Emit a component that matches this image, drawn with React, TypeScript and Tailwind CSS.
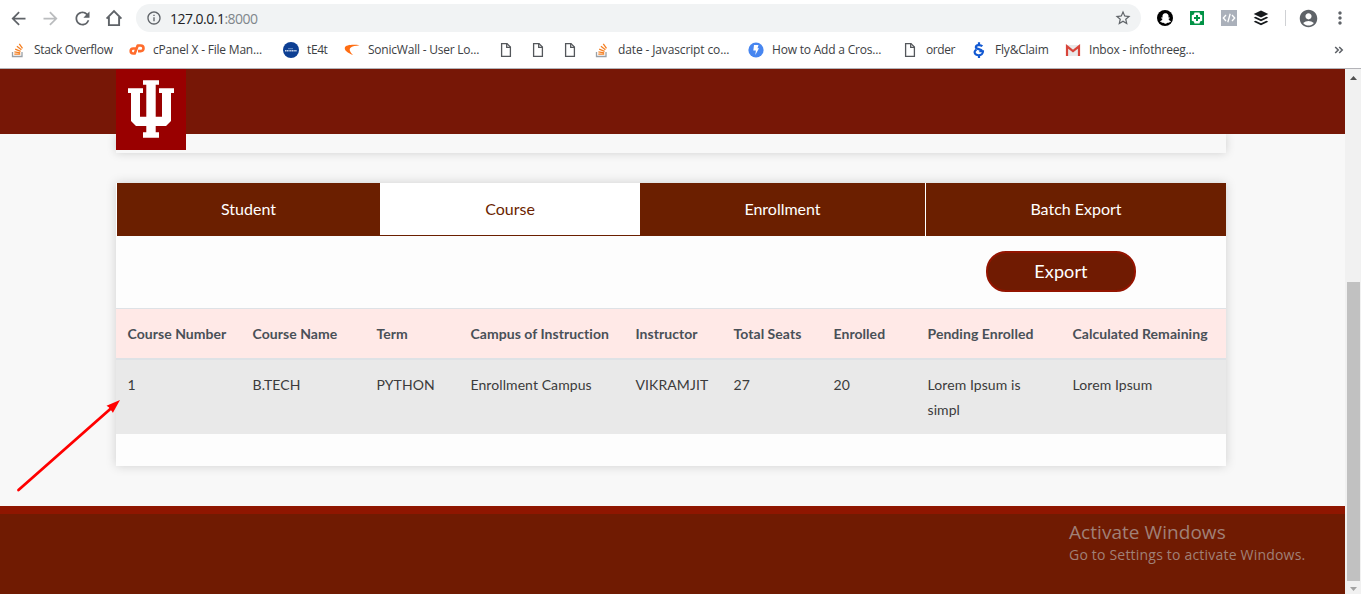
import type { ReactNode } from "react";
import { FaSnapchatGhost } from "react-icons/fa";
import {
  MdArrowBack,
  MdArrowForward,
  MdRefresh,
  MdInfoOutline,
  MdStarBorder,
  MdAccountCircle,
  MdMoreVert,
} from "react-icons/md";

function HomeIcon() {
  return (
    <svg width="20" height="20" viewBox="0 0 20 20" fill="none" stroke="#5f6368" strokeWidth="1.9">
      <path d="M2.600 10.600 10 3.200l7.400 7.400" />
      <path d="M4.900 9v8.100h10.200V9" />
    </svg>
  );
}

function StackOverflowIcon() {
  return (
    <svg width="16" height="16" viewBox="0 0 16 16" fill="none" strokeWidth="1.3">
      <path d="M2.500 10v4.500h9.500V10" stroke="#9aa0a6" />
      <path d="M4.300 12.200h6M4.400 9.800l5.800 1M5.200 7.100l5.400 2.200M6.900 4.200l4.500 3.600M9.300 1.800l3.200 4.600" stroke="#f48024" />
    </svg>
  );
}

function CPanelIcon() {
  return (
    <svg width="16" height="16" viewBox="0 0 16 16" fill="none" stroke="#ff6c2c" strokeWidth="2.600">
      <path d="M7 6.500H4.200a2.500 2.500 0 0 0 0 5h1.500L8.700 3.500h3a2.700 2.700 0 0 1 0 5.600H9" strokeLinejoin="round" />
    </svg>
  );
}

function RoundBadge() {
  return (
    <svg width="16" height="16" viewBox="0 0 16 16">
      <circle cx="8" cy="8" r="8" fill="#0d3f93" />
      <path d="M5 6.700h5" stroke="#6d8fc4" strokeWidth="1" />
      <path d="M2 8.800h12" stroke="#c5d4ea" strokeWidth="1.600" strokeDasharray="1.300 .400" />
    </svg>
  );
}

function SonicWallIcon() {
  return (
    <svg width="16" height="16" viewBox="0 0 16 16">
      <path d="M15.500 3.200C9 2.500 1.500 2.700.800 5.800.400 8.500 3.500 11 9 13 6.600 10.500 4.800 8 6.300 6 8 4 12 3.800 15.500 3.200Z" fill="#ff6d12" />
    </svg>
  );
}

function FileIcon() {
  return (
    <svg width="16" height="16" viewBox="0 0 16 16" fill="none" stroke="#54575b" strokeWidth="1.300">
      <path d="M3.600 1.600H9L12.400 5v9.400H3.600Z" />
      <path d="M8.700 1.600v3.700h3.700" />
    </svg>
  );
}

function BoltIcon() {
  return (
    <svg width="16" height="16" viewBox="0 0 16 16">
      <circle cx="8" cy="8" r="7.600" fill="#4786f0" />
      <path d="M6 3h4.500L9.500 6.300H11L7.300 13l.6-4.500H5.300Z" fill="#fff" />
    </svg>
  );
}

function FlyIcon() {
  return (
    <svg width="16" height="16" viewBox="0 0 16 16" fill="none" stroke="#1259d2">
      <path d="M8 .3v2.700M8 13v2.900" strokeWidth="2.200" />
      <path d="M11.300 4.300C9.500 2.500 4.900 2.600 4.900 5.200c0 2.200 4.800 1.500 6.300 3.600" strokeWidth="2.300" />
      <path d="M5.500 7.600C2 9.500 3.800 13.300 7.500 13.300c2.800 0 4.500-1.500 4.500-4H8.300" strokeWidth="2.100" />
    </svg>
  );
}

function GmailIcon() {
  return (
    <svg width="16" height="16" viewBox="0 0 16 16">
      <path d="M1 3h14v11H1Z" fill="#e9e9e9" />
      <path d="M2 14V4.300l6 4.900 6-4.900V14" fill="none" stroke="#d8443a" strokeWidth="2.200" />
    </svg>
  );
}

function BufferIcon() {
  return (
    <svg width="16" height="16" viewBox="0 0 16 16" fill="#16191c">
      <path d="M8 .5 15.300 4 8 7.500.700 4Z" />
      <path d="M2.600 6.700.700 7.800 8 11.300l7.300-3.500-1.900-1.100L8 9.300Z" />
      <path d="M2.600 10.700.700 11.800 8 15.300l7.300-3.500-1.900-1.100L8 13.300Z" />
    </svg>
  );
}

function PlusBadge() {
  return (
    <svg width="16" height="16" viewBox="0 0 16 16">
      <path d="M1 1h14v14H1Z" fill="#009245" />
      <path d="M5.500 2.600h5l.6 1.900 2.100.8v5.400l-2.100.8-.6 1.900h-5l-.6-1.900-2.100-.8V5.300l2.100-.8Z" fill="#fff" />
      <path d="M8 5v6M5 8h6" stroke="#009245" strokeWidth="2" />
    </svg>
  );
}

function CodeBadge() {
  return (
    <svg width="16" height="16" viewBox="0 0 16 16">
      <path d="M0 0h16v16H0Z" fill="#aab0ba" />
      <path d="M5 5 2.300 8 5 11M11 5l2.700 3L11 11M9.200 3.800 6.800 12.200" fill="none" stroke="#fff" strokeWidth="1.300" />
    </svg>
  );
}

function TridentLogo() {
  return (
    <svg width="70" height="81" viewBox="0 0 70 81">
      <path d="M0 0h70v81H0Z" fill="#990000" />
      <path
        d="M27 11.200h16v4.500h-3.300V47.700H46V24h-3v-4.700h15V24h-3v28l-5 5H39.700v6.200H43v5.600H27v-5.600h3.300V57H20l-5-5V24h-3v-4.700h15V24h-3v23.700h6.300v-32H27Z"
        fill="#fff"
      />
    </svg>
  );
}

function Bookmark({ icon, label, width, tracking }: { icon: ReactNode; label?: string; width: string; tracking?: string }) {
  return (
    <div className={`flex shrink-0 items-center gap-2 ${width}`}>
      <span className="shrink-0">{icon}</span>
      {label && <span className={`whitespace-nowrap ${tracking ?? ""}`}>{label}</span>}
    </div>
  );
}

function BrowserBar() {
  return (
    <header className="h-[69px] border-b border-[#b3b3b8] bg-white font-['Open_Sans','Noto_Sans',sans-serif]">
      <div className="flex h-9 items-center text-[#5f6368]">
        <div className="flex w-[136px] items-center gap-[11px] pl-[7.5px]">
          <MdArrowBack size={21} />
          <MdArrowForward size={21} className="text-[#babcbe]" />
          <MdRefresh size={21} />
          <HomeIcon />
        </div>
        <div className="mr-4 flex h-7 w-[1005px] items-center rounded-full bg-[#f1f3f4] pr-[9px] pl-[10px]">
          <MdInfoOutline size={16} />
          <span className="ml-2 text-[14px] tracking-[-0.52px] text-[#202124]">
            127.0.0.1<span className="text-[#80868b]">:8000</span>
          </span>
          <MdStarBorder size={18} className="ml-auto" />
        </div>
        <span className="flex h-4 w-4 items-center justify-center rounded-full bg-black text-white">
          <FaSnapchatGhost size={11} />
        </span>
        <span className="ml-4"><PlusBadge /></span>
        <span className="ml-4"><CodeBadge /></span>
        <span className="ml-4"><BufferIcon /></span>
        <span className="ml-4 h-4 w-px bg-[#cfd1d4]" />
        <MdAccountCircle size={21} className="ml-[11.5px]" />
        <MdMoreVert size={20} className="ml-[11.5px]" />
      </div>
      <nav className="flex h-7 items-center pl-[10px] text-[12px] text-[#3c4043]">
        <Bookmark icon={<StackOverflowIcon />} label="Stack Overflow" width="w-[119px]" tracking="tracking-[-0.33px]" />
        <Bookmark icon={<CPanelIcon />} label="cPanel X - File Man..." width="w-[154px]" tracking="tracking-[-0.2px]" />
        <Bookmark icon={<RoundBadge />} label="tE4t" width="w-[61px]" tracking="tracking-[-0.4px]" />
        <Bookmark icon={<SonicWallIcon />} label="SonicWall - User Lo..." width="w-[154px]" tracking="tracking-[-0.22px]" />
        <Bookmark icon={<FileIcon />} width="w-8" />
        <Bookmark icon={<FileIcon />} width="w-8" />
        <Bookmark icon={<FileIcon />} width="w-8" />
        <Bookmark icon={<StackOverflowIcon />} label="date - Javascript co..." width="w-[154px]" tracking="tracking-[-0.13px]" />
        <Bookmark icon={<BoltIcon />} label="How to Add a Cros..." width="w-[154px]" tracking="tracking-[-0.2px]" />
        <Bookmark icon={<FileIcon />} label="order" width="w-[69px]" tracking="tracking-[-0.4px]" />
        <Bookmark icon={<FlyIcon />} label="Fly&Claim" width="w-[94px]" tracking="tracking-[-0.2px]" />
        <Bookmark icon={<GmailIcon />} label="Inbox - infothreeg..." width="w-[269px]" tracking="tracking-[-0.18px]" />
        <svg width="10" height="8" viewBox="0 0 10 8" fill="none" stroke="#5f6368" strokeWidth="1.600">
          <path d="m1.200 1 3 3-3 3M5.200 1l3 3-3 3" />
        </svg>
      </nav>
    </header>
  );
}

const columns = [
  { title: "Course Number", value: "1" },
  { title: "Course Name", value: "B.TECH" },
  { title: "Term", value: "PYTHON" },
  { title: "Campus of Instruction", value: "Enrollment Campus" },
  { title: "Instructor", value: "VIKRAMJIT" },
  { title: "Total Seats", value: "27" },
  { title: "Enrolled", value: "20" },
  { title: "Pending Enrolled", value: "Lorem Ipsum is simpl" },
  { title: "Calculated Remaining", value: "Lorem Ipsum" },
];

const rowGrid = "grid grid-cols-[125px_124px_94px_165px_98px_100px_94px_145px_165px]";

function CoursePanel() {
  return (
    <section className="mt-[30px] ml-[116px] h-[283px] w-[1110px] bg-[#fdfdfd] shadow-[0_0_10px_rgba(0,0,0,0.17)]">
      <div className="flex h-[53px] bg-white pl-px text-center text-[16px] leading-[52px] text-white">
        <div className="w-[263px] bg-[#6b1f00]">Student</div>
        <div className="w-[260px] border-b border-[#6b1f00] bg-white text-[#6b1f00]">Course</div>
        <div className="w-[285px] bg-[#6b1f00]">Enrollment</div>
        <div className="ml-px w-[300px] bg-[#6b1f00]">Batch Export</div>
      </div>
      <div className="flex h-[72px] justify-end pt-[15px] pr-[90px]">
        <button className="h-[41px] w-[150px] rounded-[20px] border-2 border-[#941400] bg-[#701b02] text-[18px] tracking-[0.1px] text-white">
          Export
        </button>
      </div>
      <div className={`${rowGrid} h-[52px] border-t border-b-2 border-[#dee2e6] bg-[#ffe9e7] text-[14px] leading-[50px] font-bold tracking-[0.05px] text-[#495057]`}>
        {columns.map((column) => (
          <div key={column.title} className="pl-[11.5px] whitespace-nowrap">{column.title}</div>
        ))}
      </div>
      <div className={`${rowGrid} h-[74px] bg-[#e9e9e9] pt-3 text-[14px] leading-[25px] tracking-[0.08px] text-[#3b3b3b]`}>
        {columns.map((column) => (
          <div key={column.title} className="pr-3 pl-[11.5px]">{column.value}</div>
        ))}
      </div>
    </section>
  );
}

function ScrollBar() {
  return (
    <aside className="flex w-4 flex-col items-center bg-[#f1f1f1]">
      <svg width="17" height="17" viewBox="0 0 17 17" className="shrink-0">
        <path d="m5 11 3.500-4 3.500 4Z" fill="#505050" />
      </svg>
      <div className="mt-[196px] ml-px h-[299px] w-[13px] bg-[#c1c1c1]" />
      <svg width="16" height="13" viewBox="0 0 16 13">
        <path d="m5 6 3.500 4L12 6Z" fill="#a3a3a3" />
      </svg>
    </aside>
  );
}

export default function App() {
  return (
    <div className="relative h-[594px] w-[1361px] overflow-hidden">
      <BrowserBar />
      <div className="flex h-[525px]">
        <main className="flex w-[1345px] flex-col bg-[#f8f8f8] font-['Lato',sans-serif]">
          <div className="relative z-10 h-[65px] shrink-0 bg-[#771706] pl-[116px]">
            <TridentLogo />
          </div>
          <section className="ml-[116px] h-[19px] w-[1110px] shrink-0 bg-[#f8f8f8] shadow-[0_0_10px_rgba(0,0,0,0.17)]" />
          <CoursePanel />
          <footer className="mt-10 h-[88px] border-t-8 border-[#8f1600] bg-[#701b02] pt-[6px] pl-[1069px] font-['Open_Sans','Noto_Sans',sans-serif] text-[#a08077]">
            <p className="text-[19px] leading-6 tracking-[0.05px] whitespace-nowrap">Activate Windows</p>
            <p className="text-[14px] leading-[21px] tracking-[0.2px] whitespace-nowrap">Go to Settings to activate Windows.</p>
          </footer>
        </main>
        <ScrollBar />
      </div>
      <svg className="absolute top-[395px] left-3" width="112" height="100" viewBox="12 395 112 100">
        <path d="M18.500 490 112 407.500" stroke="#f00" strokeWidth="2.800" strokeLinecap="round" />
        <path d="m120 400-13.500 5.800 2.300 1.500 3.800 5 .2.700Z" fill="#f00" />
      </svg>
    </div>
  );
}
